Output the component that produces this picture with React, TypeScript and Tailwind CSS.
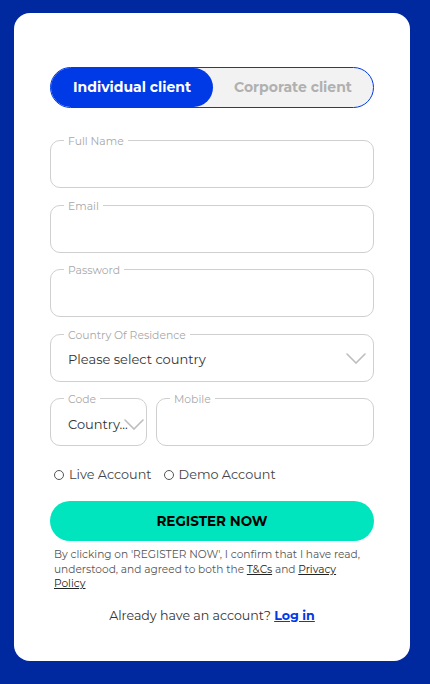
import React, { useState } from "react";

const font = { fontFamily: "Montserrat, Inter, 'Open Sans', sans-serif" };

const Chevron: React.FC<{ className?: string }> = ({ className }) => (
  <svg viewBox="0 0 20 11" className={className} fill="none" stroke="#bdbdbd" strokeWidth="1.6" strokeLinecap="round">
    <path d="M1 1l9 9 9-9" />
  </svg>
);

const Field: React.FC<{ label: string; className?: string; children?: React.ReactNode }> = ({
  label,
  className = "",
  children,
}) => (
  <div className={`relative h-[48px] rounded-[10px] border border-[#cfcfcf] ${className}`}>
    <span className="absolute -top-[6px] left-[13px] bg-white px-[4px] text-[10.8px] leading-[13px] text-[#a8a8a8]">
      {label}
    </span>
    {children}
  </div>
);

export default function App() {
  const [tab, setTab] = useState<"individual" | "corporate">("individual");

  return (
    <div className="min-h-[684px] w-full bg-[#00299f] px-[14px] pt-[13px] pb-[23px]" style={font}>
      <div className="flex h-[648px] w-[396px] flex-col rounded-[16px] bg-white px-[36px] pt-[54px]">
        {/* client type toggle */}
        <div className="flex h-[41px] rounded-full border border-[#0039e6] bg-[#f2f2f2]">
          <button
            onClick={() => setTab("individual")}
            className={`h-full w-[162px] rounded-full text-[14px] font-bold ${
              tab === "individual" ? "bg-[#0039e6] text-white" : "text-[#b0b0b0]"
            }`}
          >
            Individual client
          </button>
          <button
            onClick={() => setTab("corporate")}
            className={`h-full flex-1 rounded-full text-[14px] font-bold ${
              tab === "corporate" ? "bg-[#0039e6] text-white" : "text-[#b0b0b0]"
            }`}
          >
            Corporate client
          </button>
        </div>

        <div className="mt-[32px] flex flex-col gap-[16.5px]">
          <Field label="Full Name" />
          <Field label="Email" />
          <Field label="Password" />
          <Field label="Country Of Residence" className="flex items-center justify-between pt-[5px] pl-[17px] pr-[7px]">
            <span className="text-[13px] text-[#333]">Please select country</span>
            <Chevron className="-mt-[4px] h-[11px] w-[20px]" />
          </Field>
          <div className="flex gap-[9px]">
            <Field label="Code" className="flex w-[97px] shrink-0 items-center pt-[6px] pl-[17px]">
              <span className="text-[13px] text-[#333]">Country...</span>
              <Chevron className="-ml-[4px] -mt-[2px] h-[11px] w-[20px]" />
            </Field>
            <Field label="Mobile" className="flex-1" />
          </div>
        </div>

        {/* account type */}
        <div className="mt-[19px] flex items-center gap-[12px] pl-[4px] text-[12.8px] text-[#444]">
          <label className="flex items-center gap-[5px]">
            <span className="h-[10px] w-[10px] rounded-full border border-[#555]" />
            Live Account
          </label>
          <label className="flex items-center gap-[5px]">
            <span className="h-[10px] w-[10px] rounded-full border border-[#555]" />
            Demo Account
          </label>
        </div>

        <button className="mt-[17px] h-[40px] w-full rounded-full bg-[#00e5be] text-[13.5px] font-bold text-black">
          REGISTER NOW
        </button>

        <p className="mt-[7px] px-[4px] text-[10.6px] leading-[14.5px] text-[#555]">
          By clicking on 'REGISTER NOW', I confirm that I have read, understood, and agreed to both the{" "}
          <a className="text-[#222] underline">T&amp;Cs</a> and{" "}
          <a className="text-[#222] underline">Privacy Policy</a>
        </p>

        <p className="mt-[15px] text-center text-[12.6px] text-[#333]">
          Already have an account?{" "}
          <a className="font-bold text-[#0039e6] underline">Log in</a>
        </p>
      </div>
    </div>
  );
}
